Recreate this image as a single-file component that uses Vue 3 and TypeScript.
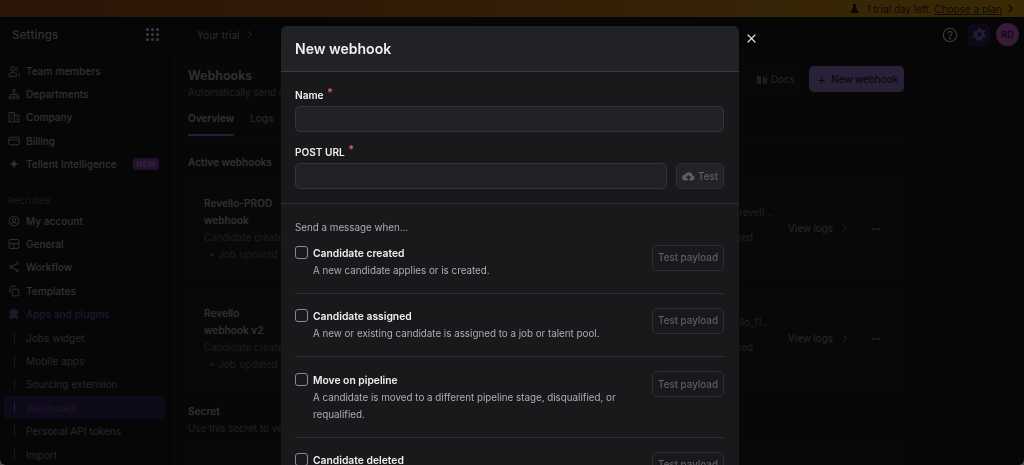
<script setup lang="ts">
const accountLinks = [
  { label: 'Team members', icon: 'team' },
  { label: 'Departments', icon: 'org' },
  { label: 'Company', icon: 'company' },
  { label: 'Billing', icon: 'card' },
  { label: 'Tellent Intelligence', icon: 'spark', badge: 'NEW' }
]

const recruiteeLinks = [
  { label: 'My account', icon: 'user' },
  { label: 'General', icon: 'layout' },
  { label: 'Workflow', icon: 'share' },
  { label: 'Templates', icon: 'copy' },
  { label: 'Apps and plugins', icon: 'puzzle', active: true }
]

const pluginLinks = ['Jobs widget', 'Mobile apps', 'Sourcing extension', 'Webhooks', 'Personal API tokens', 'Import']

const webhooks = [
  { name: 'Revello-PROD webhook', url: 'https://ats.io/?id=revell...' },
  { name: 'Revello webhook v2', url: 'https://ats.io/revello_11...' }
]

const events = [
  { title: 'Candidate created', text: 'A new candidate applies or is created.' },
  { title: 'Candidate assigned', text: 'A new or existing candidate is assigned to a job or talent pool.' },
  { title: 'Move on pipeline', text: 'A candidate is moved to a different pipeline stage, disqualified, or requalified.' },
  { title: 'Candidate deleted', text: 'A candidate is deleted.' }
]

const iconPaths: Record<string, string> = {
  team: 'M6.5 8a3 3 0 1 0 0-6 3 3 0 0 0 0 6zM1.5 15v-1.5c0-2 2-3.5 5-3.5s5 1.5 5 3.5V15zM11 2.5a3 3 0 0 1 0 5.4M13.5 10.5c1 .5 1.5 1.5 1.5 3V15',
  org: 'M8 1.5a1.7 1.7 0 1 0 0 3.4 1.7 1.7 0 0 0 0-3.4zM8 5v3.5M3 11V8.5h10V11M8 8.5V11M3 11.2a1.7 1.7 0 1 0 0 3.4 1.7 1.7 0 0 0 0-3.4zM8 11.2a1.7 1.7 0 1 0 0 3.4 1.7 1.7 0 0 0 0-3.4zM13 11.2a1.7 1.7 0 1 0 0 3.4 1.7 1.7 0 0 0 0-3.4z',
  company: 'M1.5 14.5V2h7v12.5M8.5 5.5h6v9M1 14.5h14M4 5h2M4 8h2M4 11h2M11 8h1.5M11 11h1.5',
  card: 'M2.5 3h11A1.5 1.5 0 0 1 15 4.5v7a1.5 1.5 0 0 1-1.5 1.5h-11A1.5 1.5 0 0 1 1 11.5v-7A1.5 1.5 0 0 1 2.5 3zM1 6.5h14',
  user: 'M8 1.5a6.5 6.5 0 1 0 0 13 6.5 6.5 0 0 0 0-13zM8 4.5a2.2 2.2 0 1 0 0 4.4 2.2 2.2 0 0 0 0-4.4zM3.8 12.5c.8-1.5 2.3-2.2 4.2-2.2s3.4.7 4.2 2.2',
  layout: 'M3 2h10a1.5 1.5 0 0 1 1.5 1.5v9A1.5 1.5 0 0 1 13 14H3a1.5 1.5 0 0 1-1.5-1.5v-9A1.5 1.5 0 0 1 3 2zM1.5 7.5h13M8 7.5V14',
  share: 'M4 9.8a1.8 1.8 0 1 0 0-3.6 1.8 1.8 0 0 0 0 3.6zM12.5 4.5a1.5 1.5 0 1 0 0-3 1.5 1.5 0 0 0 0 3zM12.5 14.5a1.5 1.5 0 1 0 0-3 1.5 1.5 0 0 0 0 3zM5.5 7l5.5-3M5.5 9l5.5 3',
  copy: 'M6.5 5.5H13A1.5 1.5 0 0 1 14.5 7v6a1.5 1.5 0 0 1-1.5 1.5H7A1.5 1.5 0 0 1 5.5 13V6.5a1 1 0 0 1 1-1zM2.5 10.5v-7a2 2 0 0 1 2-2H11'
}
</script>

<template>
  <div class="page">
    <div class="banner">
      <svg class="flask" viewBox="0 0 12 12"><path d="M4 1h4v.8h-.6v3l3.1 5.2c.3.5 0 1-.6 1H2.100c-.6 0-.9-.5-.6-1l3.1-5.2v-3H4z" /></svg>
      <span>1 trial day left. <u>Choose a plan</u></span>
      <svg class="banner-chev" viewBox="0 0 8 10"><path d="M2 1l4 4-4 4" /></svg>
    </div>

    <div class="shell">
      <aside class="sidebar">
        <div class="side-head">
          <span class="side-title">Settings</span>
          <span class="grid-dots"><i v-for="n in 9" :key="n"></i></span>
        </div>

        <nav class="nav">
          <a v-for="link in accountLinks" :key="link.label" class="nav-item">
            <svg v-if="link.icon !== 'spark'" class="nav-icon" viewBox="0 0 16 16"><path :d="iconPaths[link.icon]" /></svg>
            <svg v-else class="nav-icon solid" viewBox="0 0 16 16"><path d="M8 1.5c.6 4 2.5 5.9 6.5 6.5-4 .6-5.9 2.5-6.5 6.5-.6-4-2.5-5.900-6.5-6.500 4-.6 5.900-2.500 6.500-6.500z" /></svg>
            <span>{{ link.label }}</span>
            <em v-if="link.badge" class="badge">{{ link.badge }}</em>
          </a>
        </nav>

        <div class="nav-section">Recruitee</div>

        <nav class="nav">
          <a v-for="link in recruiteeLinks" :key="link.label" class="nav-item" :class="{ purple: link.active }">
            <svg v-if="link.icon !== 'puzzle'" class="nav-icon" viewBox="0 0 16 16"><path :d="iconPaths[link.icon]" /></svg>
            <svg v-else class="nav-icon solid" viewBox="0 0 16 16"><path d="M5.5 3a2.5 2.5 0 0 1 5 0h3v4.2a2 2 0 0 0 0 3.8v3.5H9.800a1.800 1.800 0 0 0-3.600 0H2V11a2 2 0 0 0 0-3.800V3z" /></svg>
            <span>{{ link.label }}</span>
          </a>
          <a v-for="name in pluginLinks" :key="name" class="sub-item" :class="{ current: name === 'Webhooks' }">
            <span class="sub-line"></span>
            <span>{{ name }}</span>
          </a>
        </nav>
      </aside>

      <div class="content">
        <header class="topbar">
          <span class="crumb">Your trial <svg viewBox="0 0 8 10"><path d="M2 1l4 4-4 4" /></svg></span>
          <div class="top-actions">
            <svg class="help" viewBox="0 0 18 18"><circle cx="9" cy="9" r="7.5" /><path d="M6.8 7.2a2.2 2.2 0 1 1 3.4 1.8c-.8.5-1.2 1-1.2 1.800" /><circle class="dot" cx="9" cy="13" r=".6" /></svg>
            <span class="gear-box">
              <svg viewBox="0 0 16 16"><path d="M6.8 1h2.4l.4 2 1.5.7 1.8-1 1.5 2-1.400 1.500.2 1.700 1.800 1-.8 2.300-2-.2-1.200 1.200.1 2-2.300.8-1-1.800H7.700l-1 1.800-2.300-.8.1-2-1.200-1.200-2 .2L.5 9.900l1.800-1 .2-1.700L1.100 5.700l1.500-2 1.800 1 1.500-.7zM8 5.700a2.300 2.300 0 1 0 0 4.600 2.300 2.300 0 0 0 0-4.600z" fill-rule="evenodd" /></svg>
            </span>
            <span class="avatar">RD</span>
          </div>
        </header>

        <main class="panel">
          <div class="panel-head">
            <div>
              <h1>Webhooks</h1>
              <p>Automatically send data to other apps when an event happens.</p>
            </div>
            <div class="head-actions">
              <button class="btn-docs">
                <svg viewBox="0 0 14 14"><path d="M1 3.5c1.5-.6 3-.6 5 .3V13c-2-.9-3.5-.9-5-.3zM13 2.700v10c-1.500-.6-3-.6-5 .3V3.800c.6-.3 1.200-.5 1.800-.6V7l1.300-1 1 1V2.800z" /></svg>
                Docs
              </button>
              <button class="btn-new"><span class="plus">+</span>New webhook</button>
            </div>
          </div>

          <div class="tabs">
            <span class="tab on">Overview</span>
            <span class="tab">Logs</span>
          </div>

          <h2>Active webhooks</h2>
          <div v-for="hook in webhooks" :key="hook.name" class="hook-card">
            <div class="hook-main">
              <div class="hook-name">{{ hook.name }}</div>
              <div class="hook-muted">Candidate created</div>
              <div class="hook-muted bullet">• Job updated</div>
            </div>
            <div class="hook-info">
              <div>{{ hook.url }}</div>
              <div>Candidate published</div>
            </div>
            <span class="logs">View logs <svg viewBox="0 0 8 10"><path d="M2 1l4 4-4 4" /></svg></span>
            <span class="more"><i></i><i></i><i></i></span>
          </div>

          <h2 class="secret">Secret</h2>
          <p class="secret-text">Use this secret to verify the webhook signature.</p>
          <div class="hook-card secret-card"></div>
        </main>
      </div>
    </div>

    <div class="backdrop"></div>

    <button class="close" aria-label="Close">
      <svg viewBox="0 0 10 10"><path d="M1.5 1.5l7 7M8.5 1.5l-7 7" /></svg>
    </button>

    <section class="modal">
      <div class="modal-head">New webhook</div>
      <div class="modal-form">
        <label class="field-label">Name <span class="req">*</span></label>
        <input class="input" type="text" />
        <label class="field-label url-label">POST URL <span class="req">*</span></label>
        <div class="url-row">
          <input class="input" type="text" />
          <button class="test-btn">
            <svg viewBox="0 0 16 12"><path d="M4 11.5a3.5 3.5 0 0 1-.5-7A5 5 0 0 1 13 5a3.300 3.300 0 0 1-.5 6.500H9V7.800l1.500 1.400 1-1L8 4.800 4.500 8.200l1 1L7 7.800v3.700z" /></svg>
            Test
          </button>
        </div>
      </div>
      <div class="modal-events">
        <div class="send-text">Send a message when...</div>
        <div v-for="event in events" :key="event.title" class="event-row">
          <span class="check"></span>
          <div class="event-copy">
            <div class="event-title">{{ event.title }}</div>
            <div class="event-text">{{ event.text }}</div>
          </div>
          <button class="payload">Test payload</button>
        </div>
      </div>
    </section>
  </div>
</template>

<style>
html, body {
  margin: 0;
  background: #4a4a4a;
}
</style>

<style scoped>
.page {
  position: relative;
  width: 1024px;
  height: 465px;
  overflow: hidden;
  border-radius: 0 0 6px 6px;
  background: #18181b;
  color: #bcbcc4;
  font-family: Inter, "Liberation Sans", sans-serif;
  font-size: 9.8px;
}

.banner {
  height: 17px;
  display: flex;
  align-items: center;
  justify-content: flex-end;
  gap: 5px;
  padding-right: 10px;
  box-sizing: border-box;
  background: linear-gradient(90deg, #a4501e 0%, #c46e1c 45%, #dca414 100%);
  color: #3b2a0c;
  font-size: 10px;
}

.flask {
  width: 11px;
  height: 11px;
  margin-right: 1px;
  fill: #1f1808;
}

.banner-chev {
  width: 7px;
  height: 9px;
  fill: none;
  stroke: #3b2a0c;
  stroke-width: 1.5;
}

.shell {
  display: flex;
  height: 448px;
}

.sidebar {
  width: 173px;
  flex: none;
  padding: 0 4px;
  box-sizing: border-box;
}

.side-head {
  height: 35px;
  display: flex;
  align-items: center;
  justify-content: space-between;
  padding: 0 10px 0 8px;
}

.side-title {
  font-size: 11.5px;
  font-weight: 500;
  letter-spacing: 0.2px;
}

.grid-dots {
  display: grid;
  grid-template-columns: repeat(3, 3px);
  gap: 2px;
}

.grid-dots i {
  width: 3px;
  height: 3px;
  border-radius: 50%;
  background: #e4e4ea;
}

.nav {
  display: flex;
  flex-direction: column;
}

.nav-item,
.sub-item {
  height: 23.4px;
  display: flex;
  align-items: center;
  flex: none;
  font-size: 10.1px;
  font-weight: 500;
}

.nav-item {
  gap: 6px;
  padding-left: 4px;
}

.nav-item:first-child {
  margin-top: 7px;
}

.nav-icon {
  width: 12px;
  height: 12px;
  flex: none;
  fill: none;
  stroke: currentColor;
  stroke-width: 1.3;
}

.nav-icon.solid {
  fill: currentColor;
  stroke: none;
}

.badge {
  margin-left: auto;
  margin-right: 10px;
  padding: 1px 3px;
  border-radius: 3px;
  background: #8a3eb0;
  color: #d58cf0;
  font-style: normal;
  font-size: 8px;
  font-weight: 600;
  letter-spacing: 0.2px;
}

.nav-section {
  margin: 18px 0 -6px;
  height: 14px;
  padding-left: 4px;
  font-size: 9.5px;
  color: #68686f;
  line-height: 14px;
}

.purple {
  color: #6f58b4;
}

.sub-item {
  position: relative;
  padding-left: 22px;
  font-weight: 400;
  color: #94949c;
}

.sub-line {
  position: absolute;
  left: 10px;
  top: 6px;
  bottom: 6px;
  width: 1px;
  background: #5c5c64;
}

.sub-item.current {
  margin: 0 4px 0 0;
  border-radius: 5px;
  background: #3c2a60;
  color: #6650a8;
}

.sub-item.current .sub-line {
  background: #8a6fd8;
}

.content {
  flex: 1;
  min-width: 0;
  display: flex;
  flex-direction: column;
}

.topbar {
  height: 35px;
  flex: none;
  display: flex;
  align-items: center;
  justify-content: space-between;
  padding: 0 5px 0 24px;
}

.crumb {
  display: flex;
  align-items: center;
  gap: 6px;
  font-size: 10.1px;
  color: #a8a8b0;
}

.crumb svg,
.logs svg {
  width: 7px;
  height: 9px;
  fill: none;
  stroke: currentColor;
  stroke-width: 1;
}

.top-actions {
  display: flex;
  align-items: center;
  gap: 6px;
}

.help {
  width: 16px;
  height: 16px;
  margin-right: 4px;
  fill: none;
  stroke: #e4e4ea;
  stroke-width: 1.2;
}

.help .dot {
  fill: #e4e4ea;
}

.gear-box {
  width: 22px;
  height: 22px;
  display: grid;
  place-items: center;
  border-radius: 5px;
  background: #33265f;
}

.gear-box svg {
  width: 15px;
  height: 15px;
  fill: #8670c4;
}

.avatar {
  width: 23px;
  height: 23px;
  display: grid;
  place-items: center;
  border-radius: 50%;
  background: #d36ad8;
  color: #40204a;
  font-size: 9.5px;
  font-weight: 600;
}

.panel {
  flex: 1;
  padding: 15px 14px 0;
  box-sizing: border-box;
  border: 1px solid #2a2a2e;
  border-width: 1px 0 0 1px;
  border-top-left-radius: 10px;
  background: #1d1d20;
}

.panel > * {
  width: 715px;
}

.panel-head {
  display: flex;
  justify-content: space-between;
}

h1 {
  margin: 0;
  font-size: 12.5px;
  line-height: 16px;
  font-weight: 600;
}

.panel-head p {
  margin: 2px 0 0;
  color: #7c7c84;
  font-size: 9.8px;
  line-height: 14px;
  white-space: nowrap;
}

.head-actions {
  display: flex;
  gap: 9px;
  height: 26px;
  margin: -2px -1px 0 0;
}

.btn-docs,
.btn-new {
  display: flex;
  align-items: center;
  height: 26px;
  border-radius: 5px;
  font: inherit;
  font-weight: 500;
}

.btn-docs {
  gap: 3px;
  width: 50px;
  padding: 0 0 0 5px;
  border: 1px solid #2a2a2e;
  background: transparent;
  color: #7c7c84;
}

.btn-docs svg {
  width: 12px;
  height: 12px;
  fill: #7c7c84;
}

.btn-new {
  gap: 5px;
  width: 95px;
  padding: 0 0 0 8px;
  border: 0;
  background: #a47cd8;
  color: #2e2048;
}

.plus {
  font-size: 14px;
  line-height: 1;
  font-weight: 400;
}

.tabs {
  display: flex;
  gap: 16px;
  margin-top: 8px;
  height: 29px;
  border-bottom: 1px solid #2a2a2e;
}

.tab {
  height: 28px;
  box-sizing: border-box;
  padding-top: 4px;
  font-size: 10px;
  font-weight: 500;
  color: #94949c;
}

.tab.on {
  border-bottom: 2px solid #8a70d8;
  color: #bcbcc4;
  font-weight: 600;
}

h2 {
  margin: 17px 0 13px;
  font-size: 10.1px;
  line-height: 14px;
  font-weight: 600;
}

.hook-card {
  display: flex;
  align-items: center;
  height: 96px;
  margin-bottom: 14px;
  padding: 0 15px;
  box-sizing: border-box;
  border: 1px solid #2a2a2e;
  border-radius: 6px;
  background: #202023;
}

.hook-main {
  width: 76px;
  flex: none;
  align-self: flex-start;
  margin-top: 12px;
  line-height: 17px;
  white-space: nowrap;
}

.hook-name {
  white-space: normal;
  font-size: 10.1px;
  font-weight: 600;
}

.hook-muted {
  color: #70707a;
}

.bullet {
  padding-left: 5px;
  word-spacing: 1px;
}

.hook-info {
  width: 121px;
  flex: none;
  margin: -11px 0 0 378px;
  color: #7c7c84;
  line-height: 25px;
  white-space: nowrap;
}

.logs {
  display: flex;
  align-items: center;
  gap: 8px;
  margin: -3px 0 0 9px;
  color: #94949c;
  white-space: nowrap;
}

.more {
  display: flex;
  gap: 1px;
  margin: -3px 0 0 24px;
}

.more i {
  width: 2px;
  height: 2px;
  border-radius: 50%;
  background: #94949c;
}

.secret {
  margin: 16px 0 4px;
}

.secret-text {
  margin: 0 0 7px;
  color: #7c7c84;
  line-height: 14px;
}

.secret-card {
  height: 60px;
}

.backdrop {
  position: absolute;
  inset: 0;
  background: rgba(0, 0, 0, 0.74);
  backdrop-filter: blur(0.5px);
}

.close {
  position: absolute;
  left: 746px;
  top: 33px;
  width: 11px;
  height: 11px;
  padding: 0;
  border: 0;
  background: none;
}

.close svg {
  display: block;
  width: 11px;
  height: 11px;
  fill: none;
  stroke: #f4f4f6;
  stroke-width: 1.2;
}

.modal {
  position: absolute;
  left: 281px;
  top: 26px;
  width: 458px;
  height: 460px;
  border-radius: 6px;
  overflow: hidden;
  background: #19191c;
  color: #f0f0f2;
}

.modal-head {
  height: 46px;
  padding-left: 14px;
  display: flex;
  align-items: center;
  box-sizing: border-box;
  border-bottom: 1px solid #3a3b3f;
  background: #212226;
  font-size: 14px;
  font-weight: 600;
}

.modal-form {
  display: flex;
  flex-direction: column;
  height: 132px;
  padding: 15px 15px 0 14px;
  box-sizing: border-box;
  border-bottom: 1px solid #2c2d31;
}

.field-label {
  height: 17px;
  font-size: 10.1px;
  line-height: 17px;
  font-weight: 600;
  margin-bottom: 2px;
}

.req {
  position: relative;
  top: -3px;
  margin-left: 1px;
  color: #e8566c;
  font-size: 11px;
}

.url-label {
  margin-top: 12px;
}

.input {
  display: block;
  width: 100%;
  height: 26px;
  padding: 0;
  box-sizing: border-box;
  border: 1px solid #343539;
  border-radius: 5px;
  background: #212226;
}

.url-row {
  display: flex;
  gap: 9px;
}

.url-row .input {
  flex: 1;
  width: auto;
  min-width: 0;
}

.test-btn {
  display: flex;
  align-items: center;
  justify-content: center;
  gap: 3px;
  width: 48px;
  height: 26px;
  flex: none;
  padding: 0;
  border: 1px solid #2e2f33;
  border-radius: 5px;
  background: #222327;
  color: #5e5f64;
  font: inherit;
  font-weight: 500;
}

.test-btn svg {
  width: 13px;
  height: 10px;
  fill: #5e5f64;
}

.modal-events {
  padding: 16px 15px 0 14px;
}

.send-text {
  height: 16px;
  line-height: 16px;
  color: #adaeb2;
}

.event-row {
  display: flex;
  align-items: flex-start;
  padding: 9px 0 14px;
  border-bottom: 1px solid #2e2f33;
}

.event-row + .event-row {
  padding-top: 14.4px;
}

.check {
  width: 13px;
  height: 13px;
  flex: none;
  margin-top: 1px;
  border: 1px solid #8a8b90;
  border-radius: 3px;
  box-sizing: border-box;
}

.event-copy {
  flex: 1;
  min-width: 0;
  margin: 0 30px 0 5px;
}

.event-title {
  font-size: 10.3px;
  font-weight: 600;
  line-height: 17px;
}

.event-text {
  color: #adaeb2;
  line-height: 17px;
}

.payload {
  width: 72px;
  height: 26px;
  flex: none;
  margin-top: -0.5px;
  padding: 0;
  border: 1px solid #2e2f33;
  border-radius: 5px;
  background: transparent;
  color: #5e5f64;
  font: inherit;
  font-weight: 500;
}
</style>
